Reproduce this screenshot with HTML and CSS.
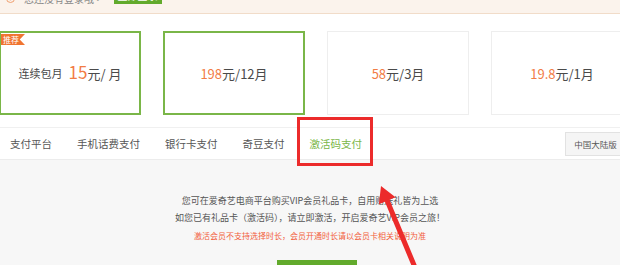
FILE: index.html
```html
<!DOCTYPE html>
<html lang="zh-CN">
<head>
    <meta charset="UTF-8">
    <title>VIP会员 - 激活码支付</title>
    <link rel="stylesheet" href="styles.css">
</head>
<body>
    <div class="page">
        <div class="login-bar">
            <span class="warn-icon">!</span>
            <span class="login-text">您还没有登录哦~</span>
            <button class="login-button">立即登录</button>
        </div>

        <div class="plans">
            <div class="plan selected">
                <span class="badge">推荐</span>
                <span class="plan-name">连续包月</span>
                <span class="price big">15</span>元/ 月
            </div>
            <div class="plan selected">
                <span class="price">198</span>元/12月
            </div>
            <div class="plan">
                <span class="price">58</span>元/3月
            </div>
            <div class="plan">
                <span class="price">19.8</span>元/1月
            </div>
        </div>

        <div class="tabs">
            <span class="tab first">支付平台</span>
            <span class="tab">手机话费支付</span>
            <span class="tab">银行卡支付</span>
            <span class="tab">奇豆支付</span>
            <span class="tab active">激活码支付<span class="mark"></span></span>
            <button class="region">中国大陆版</button>
        </div>

        <div class="panel">
            <p class="info">您可在爱奇艺电商平台购买VIP会员礼品卡，自用赠送礼皆为上选</p>
            <p class="info">如您已有礼品卡（激活码），请立即激活，开启爱奇艺VIP会员之旅！</p>
            <p class="notice">激活会员不支持选择时长，会员开通时长请以会员卡相关说明为准</p>
            <button class="activate">立即激活</button>
        </div>

        <svg class="arrow" width="620" height="265" viewBox="0 0 620 265">
            <polygon fill="#ec2b2b" points="381,186 395.5,197.3 389.5,199.8 419.9,272.7 415.3,274.7 384.9,201.8 378.9,204.3"/>
        </svg>
    </div>
</body>
</html>
```

FILE: styles.css
```css
:root {
    --green: #7ab648;
    --green-dark: #62aa2c;
    --orange: #f27c45;
    --text-color: #4a4a4a;
    --border-color: #ebebeb;
    --mark-red: #ec2b2b;
}

body {
    margin: 0;
    font-family: "Noto Sans CJK SC", "Noto Sans", sans-serif;
    color: var(--text-color);
    background-color: white;
}

.page {
    position: relative;
    width: 620px;
    height: 265px;
    overflow: hidden;
}

.login-bar {
    display: flex;
    align-items: center;
    height: 30px;
    margin-top: -17px;
    padding-left: 6px;
    background-color: #fbf3ec;
    border-bottom: 1px solid #f1dcc9;
    font-size: 10px;
    color: #888;
}

.warn-icon {
    width: 7px;
    height: 7px;
    border: 1px solid #f0a070;
    border-radius: 50%;
    font-size: 6px;
    line-height: 7px;
    text-align: center;
    color: #f0a070;
    margin-right: 9px;
}

.login-text {
    margin-right: 14px;
}

.login-button {
    border: none;
    background-color: var(--green-dark);
    color: white;
    font-family: inherit;
    font-size: 10px;
    width: 48px;
    height: 18px;
    padding: 0;
    margin-top: -6px;
}

.plans {
    display: flex;
    gap: 22px;
    margin: 17px 0 0 -1px;
}

.plan {
    position: relative;
    flex: 0 0 auto;
    width: 140px;
    height: 82px;
    border: 1px solid #eeeeee;
    display: flex;
    align-items: center;
    justify-content: center;
    font-size: 13px;
    color: var(--text-color);
}

.plan.selected {
    border: 2px solid var(--green);
    width: 138px;
    height: 80px;
}

.plan-name {
    font-size: 11px;
    margin-right: 6px;
}

.price {
    color: var(--orange);
}

.price.big {
    font-size: 17px;
    margin-top: -3px;
}

.badge {
    position: absolute;
    top: 1px;
    left: 0;
    padding: 0 6px 0 2px;
    height: 11px;
    line-height: 11px;
    font-size: 8px;
    color: white;
    background-color: #f07430;
    clip-path: polygon(0 0, 100% 0, 78% 50%, 100% 100%, 0 100%);
}

.tabs {
    display: flex;
    align-items: center;
    height: 31px;
    margin-top: 12px;
    border-top: 1px solid #f0f0f0;
    border-bottom: 1px solid #ececec;
    font-size: 10.5px;
    color: #555;
}

.tab {
    position: relative;
    margin-right: 25px;
}

.tab.first {
    margin-left: 10px;
}

.tab.active {
    color: var(--green);
}

.mark {
    position: absolute;
    left: -13px;
    right: -11px;
    top: -19px;
    bottom: -15px;
    border: 3px solid var(--mark-red);
}

.region {
    margin-left: auto;
    margin-right: -6px;
    width: 61px;
    height: 24px;
    padding: 0;
    border: 1px solid #e2e2e2;
    background-color: #f5f5f5;
    font-family: inherit;
    font-size: 8.5px;
    color: #555;
}

.panel {
    background-color: #f7f7f7;
    height: 120px;
    padding-top: 32px;
    text-align: center;
}

.info {
    margin: 0;
    font-size: 9px;
    line-height: 17px;
    color: #555;
}

.notice {
    margin: 2px 0 0;
    font-size: 8px;
    line-height: 16px;
    color: #f2603c;
}

.activate {
    display: block;
    margin: 16px 0 0 277px;
    width: 80px;
    height: 26px;
    border: none;
    background-color: var(--green-dark);
    color: white;
    font-family: inherit;
    font-size: 11px;
}

.arrow {
    position: absolute;
    left: 0;
    top: 0;
}
```
